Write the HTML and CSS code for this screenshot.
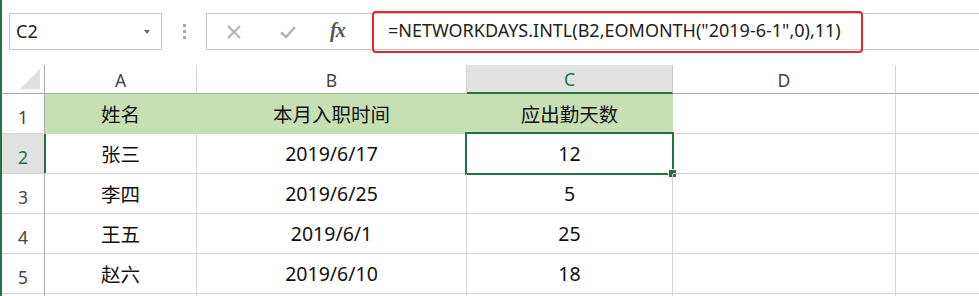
FILE: index.html
```html
<!DOCTYPE html>
<html lang="zh-CN">
<head>
<meta charset="utf-8">
<link rel="stylesheet" href="styles.css">
</head>
<body>
<div class="app">
  <div class="fbar">
    <div class="namebox"><span class="nb-text">C2</span><span class="nb-arrow"></span></div>
    <div class="grip"><i></i><i></i><i></i></div>
    <div class="btns">
      <svg class="ico" width="16" height="16" viewBox="0 0 16 16"><path d="M2 2 L14 14 M14 2 L2 14" stroke="#b3b3b3" stroke-width="2" fill="none"/></svg>
      <svg class="ico" width="18" height="16" viewBox="0 0 18 16"><path d="M2 8.5 L7 13 L16 3" stroke="#b3b3b3" stroke-width="2.6" fill="none"/></svg>
      <span class="fx">fx</span>
    </div>
    <div class="formula">
      <div class="mark"><span class="ftext">=NETWORKDAYS.INTL(B2,EOMONTH("2019-6-1",0),11)</span></div>
    </div>
  </div>
  <div class="sheet">
    <div class="corner"><span class="tri"></span></div>
    <div class="ch">A</div>
    <div class="ch">B</div>
    <div class="ch ch-sel">C</div>
    <div class="ch">D</div>
    <div class="ch ch-last">E</div>

    <div class="rh">1</div>
    <div class="c head">姓名</div>
    <div class="c head">本月入职时间</div>
    <div class="c head">应出勤天数</div>
    <div class="c"></div>
    <div class="c"></div>

    <div class="rh rh-sel">2</div>
    <div class="c">张三</div>
    <div class="c">2019/6/17</div>
    <div class="c sel">12<span class="selbox"><span class="handle"></span></span></div>
    <div class="c"></div>
    <div class="c"></div>

    <div class="rh">3</div>
    <div class="c">李四</div>
    <div class="c">2019/6/25</div>
    <div class="c">5</div>
    <div class="c"></div>
    <div class="c"></div>

    <div class="rh">4</div>
    <div class="c">王五</div>
    <div class="c">2019/6/1</div>
    <div class="c">25</div>
    <div class="c"></div>
    <div class="c"></div>

    <div class="rh">5</div>
    <div class="c">赵六</div>
    <div class="c">2019/6/10</div>
    <div class="c">18</div>
    <div class="c"></div>
    <div class="c"></div>

    <div class="rh"></div>
    <div class="c"></div>
    <div class="c"></div>
    <div class="c"></div>
    <div class="c"></div>
    <div class="c"></div>
  </div>
</div>
</body>
</html>
```
FILE: styles.css
```css
html, body {
  margin: 0;
  padding: 0;
  background: #fff;
  overflow: hidden;
}
body {
  width: 979px;
  height: 296px;
  font-family: "Noto Sans", "Noto Sans CJK SC", sans-serif;
}
.app {
  height: 296px;
  border-left: 2px solid #217346;
  box-sizing: border-box;
  overflow: hidden;
}
.fbar {
  display: flex;
  align-items: flex-start;
  padding-top: 13px;
  height: 65px;
  box-sizing: border-box;
}
.namebox {
  margin-left: 7px;
  width: 153px;
  height: 37px;
  border: 1px solid #c6c6c6;
  box-sizing: border-box;
  display: flex;
  align-items: center;
  justify-content: space-between;
  padding: 0 11px 2px 6px;
  position: relative;
}
.nb-text {
  font-size: 18px;
  color: #222;
}
.nb-arrow {
  width: 0;
  height: 0;
  border-left: 3.5px solid transparent;
  border-right: 3.5px solid transparent;
  border-top: 4px solid #6a6a6a;
  margin-top: 3px;
}
.grip {
  width: 44px;
  height: 37px;
  display: flex;
  flex-direction: column;
  align-items: center;
  justify-content: center;
  gap: 3px;
}
.grip i {
  display: block;
  width: 3px;
  height: 3px;
  background: #a9a9a9;
}
.btns {
  width: 168px;
  height: 37px;
  border: 1px solid #c6c6c6;
  box-sizing: border-box;
  display: flex;
  align-items: center;
  padding-left: 19px;
  gap: 37px;
}
.fx {
  font-family: "Liberation Serif", serif;
  font-style: italic;
  font-weight: bold;
  font-size: 20px;
  color: #555;
  letter-spacing: -1px;
  margin-left: -4px;
  padding-bottom: 2px;
}
.formula {
  flex: 1;
  height: 37px;
  border-top: 1px solid #c6c6c6;
  border-bottom: 1px solid #c6c6c6;
  box-sizing: border-box;
  position: relative;
}
.mark {
  position: absolute;
  left: -2px;
  top: -3px;
  width: 491px;
  height: 42px;
  border: 2px solid #e5262b;
  border-radius: 4px;
  box-sizing: border-box;
  display: flex;
  align-items: center;
  padding-left: 14px;
  padding-bottom: 4px;
}
.ftext {
  font-size: 18px;
  color: #222;
  white-space: nowrap;
}
.sheet {
  display: grid;
  grid-template-columns: 43px 152px 270px 206px 223px 1fr;
  grid-template-rows: 29px repeat(5, 40px) 20px;
}
.sheet > div {
  box-sizing: border-box;
  border-right: 1px solid #d4d4d4;
  border-bottom: 1px solid #d4d4d4;
}
.corner {
  border-right-color: #ababab !important;
  border-bottom-color: #ababab !important;
  position: relative;
}
.tri {
  position: absolute;
  right: 4px;
  bottom: 4px;
  width: 0;
  height: 0;
  border-left: 20px solid transparent;
  border-bottom: 20px solid #dfdfdf;
}
.ch {
  border-bottom-color: #ababab !important;
  display: flex;
  align-items: center;
  justify-content: center;
  font-size: 17.5px;
  color: #444;
  padding-top: 1px;
}
.ch-sel {
  background: #e1e1e1;
  color: #217346;
  border-bottom: 2px solid #217346 !important;
  border-right-color: #c6c6c6 !important;
}
.ch-last {
  justify-content: flex-start;
  padding-left: 82px;
}
.rh {
  border-right-color: #ababab !important;
  display: flex;
  align-items: flex-end;
  justify-content: center;
  font-size: 17.5px;
  color: #444;
  padding-bottom: 4px;
}
.rh-sel {
  background: #e1e1e1;
  color: #217346;
  border-right: 2px solid #217346 !important;
  width: 44px;
}
.c {
  display: flex;
  align-items: center;
  justify-content: center;
  font-size: 19.5px;
  color: #111;
  position: relative;
}
.head {
  background: #c6e0b4;
  border-right-color: #c6e0b4 !important;
  border-bottom-color: #c6e0b4 !important;
}
.sel {
  overflow: visible;
}
.selbox {
  position: absolute;
  left: -2px;
  top: -2px;
  width: 209px;
  height: 43px;
  border: 2px solid #217346;
  box-sizing: border-box;
}
.handle {
  position: absolute;
  right: -4px;
  bottom: -4px;
  width: 7px;
  height: 7px;
  background: #217346;
  box-shadow: 0 0 0 1px #fff;
}
```
